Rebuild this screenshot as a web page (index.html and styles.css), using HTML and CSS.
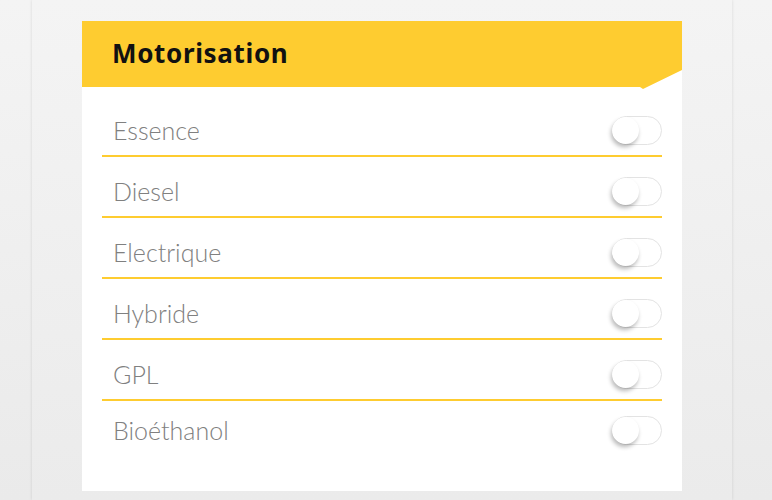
FILE: index.html
```html
<!DOCTYPE html>
<html lang="fr">
<head>
    <meta charset="UTF-8">
    <title>Motorisation</title>
    <link rel="stylesheet" href="styles.css">
</head>
<body>
    <div class="page">
        <div class="filter-card">
            <div class="filter-header">
                <h2>Motorisation</h2>
            </div>
            <div class="filter-list">
                <label class="filter-row">
                    <span class="filter-name">Essence</span>
                    <span class="switch"></span>
                </label>
                <label class="filter-row">
                    <span class="filter-name">Diesel</span>
                    <span class="switch"></span>
                </label>
                <label class="filter-row">
                    <span class="filter-name">Electrique</span>
                    <span class="switch"></span>
                </label>
                <label class="filter-row">
                    <span class="filter-name">Hybride</span>
                    <span class="switch"></span>
                </label>
                <label class="filter-row">
                    <span class="filter-name">GPL</span>
                    <span class="switch"></span>
                </label>
                <label class="filter-row">
                    <span class="filter-name">Bioéthanol</span>
                    <span class="switch"></span>
                </label>
            </div>
        </div>
    </div>
</body>
</html>
```

FILE: styles.css
```css
body {
    margin: 0;
    font-family: 'Lato', 'Liberation Sans', sans-serif;
    background: linear-gradient(#f4f4f4, #eaeaea);
    min-height: 100vh;
}
.page {
    margin-left: 32px;
    width: 700px;
    min-height: 100vh;
    padding-top: 21px;
    box-sizing: border-box;
    background: linear-gradient(#f4f4f4, #ebebeb);
    box-shadow: 0 0 3px rgba(0, 0, 0, 0.12);
}
.filter-card {
    margin-left: 50px;
    width: 600px;
    height: 470px;
    background-color: white;
}
.filter-header {
    height: 68px;
    background-color: #fecc30;
    clip-path: polygon(0 0, 100% 0, 100% 49px, 561px 68px, 558px 66px, 0 66px);
}
.filter-header h2 {
    margin: 0;
    padding: 17px 0 0 30px;
    font-family: 'Noto Sans', sans-serif;
    font-size: 26px;
    font-weight: 700;
    color: #111;
    line-height: 30px;
    letter-spacing: 0.65px;
}
.filter-list {
    padding: 7px 20px 0;
}
.filter-row {
    display: flex;
    align-items: center;
    justify-content: space-between;
    padding: 20px 0 10px 11px;
    border-bottom: 2px solid #fecc30;
}
.filter-row:last-child {
    border-bottom: none;
    padding-top: 15px;
}
.filter-name {
    font-size: 25px;
    font-weight: 300;
    color: #808080;
    line-height: 29px;
}
.switch {
    position: relative;
    width: 50px;
    height: 29px;
    box-sizing: border-box;
    border: 1.5px solid #e3e3e3;
    border-radius: 15px;
}
.switch::after {
    content: '';
    position: absolute;
    left: -1px;
    top: 0;
    width: 27px;
    height: 27px;
    border-radius: 50%;
    background-color: white;
    box-shadow: -1px 3px 4px rgba(0, 0, 0, 0.28);
}
```
